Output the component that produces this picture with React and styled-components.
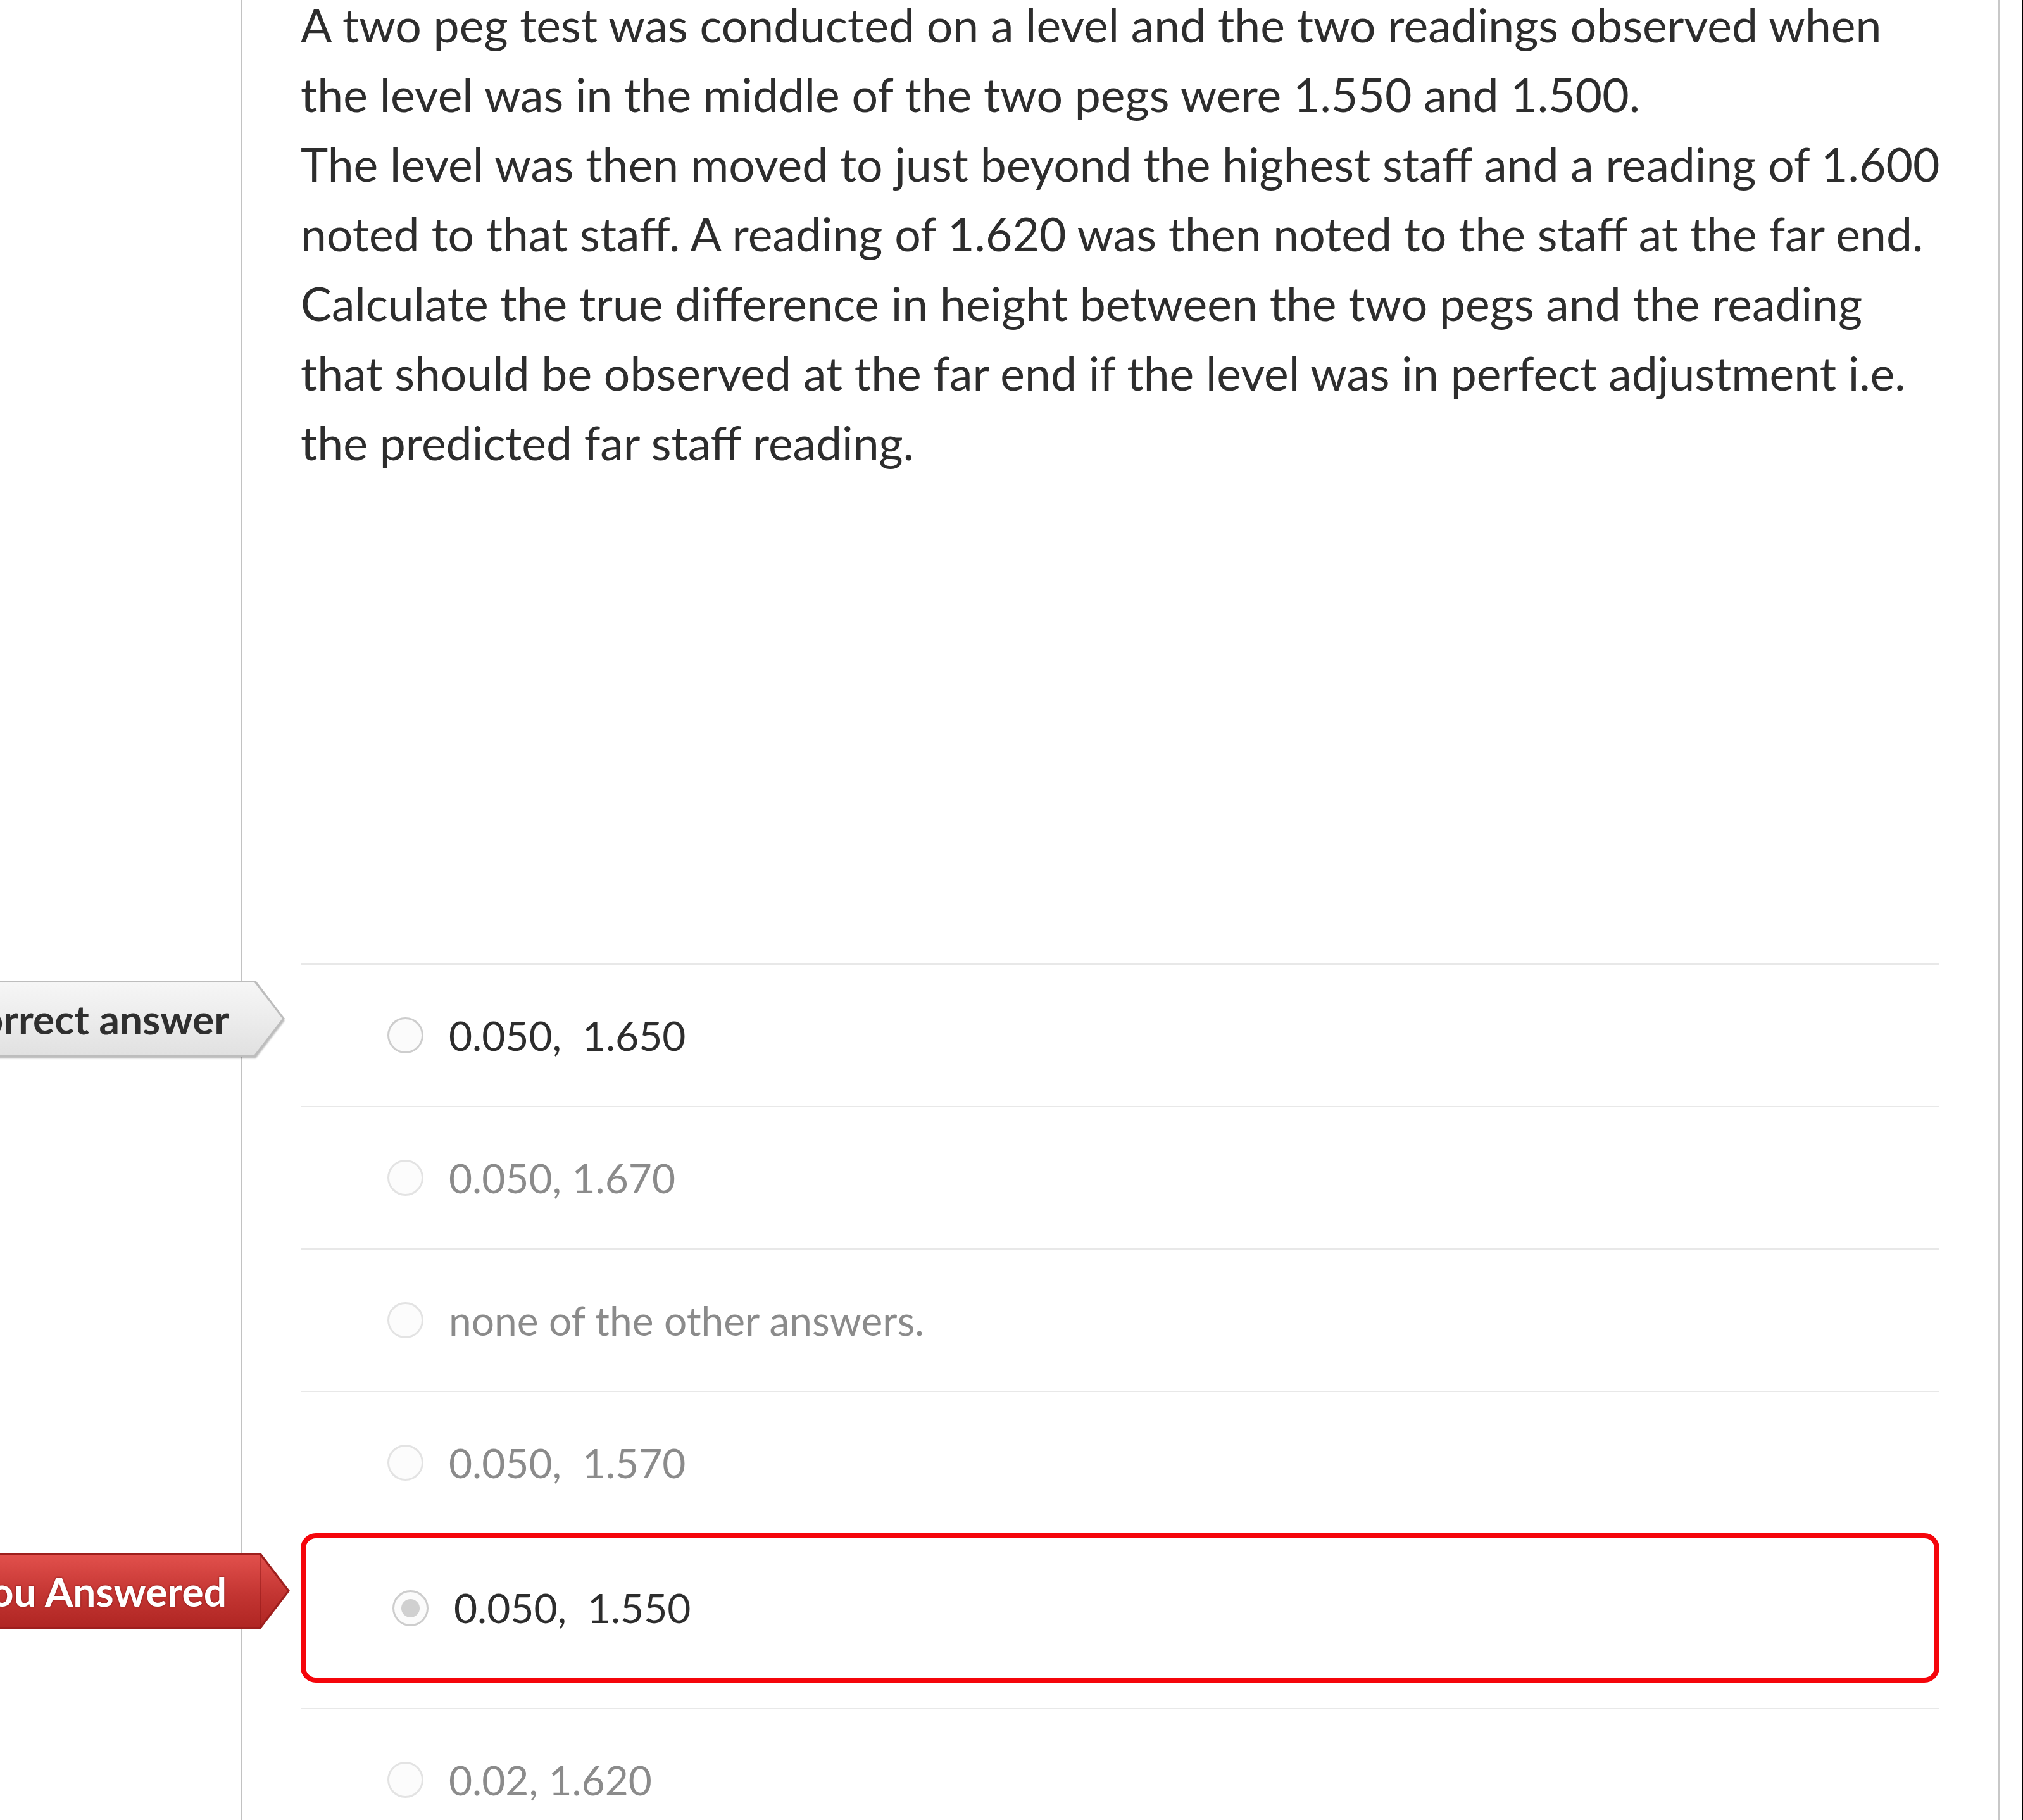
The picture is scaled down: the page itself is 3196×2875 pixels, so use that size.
import React from 'react';
import styled, { createGlobalStyle } from 'styled-components';

const GlobalStyle = createGlobalStyle`
    html, body {
        margin: 0;
        padding: 0;
        background: #ffffff;
    }
    body {
        font-family: Lato, "Open Sans", "Liberation Sans", sans-serif;
        color: #2d2d2d;
    }
`;

const Page = styled.div`
    display: flex;
    width: 3196px;
    height: 2875px;
    overflow: hidden;
    background: #ffffff;
`;

const Sidebar = styled.div`
    flex: 0 0 380px;
    border-right: 2px solid #c2c2c2;
`;

const Main = styled.main`
    flex: 1 1 auto;
    padding: 0 92px 0 93px;
    border-right: 3px solid #c8c8c8;
`;

const Gutter = styled.div`
    flex: 0 0 36px;
`;

const Edge = styled.div`
    flex: 0 0 4px;
    background: #000000;
`;

const Question = styled.div`
    margin: -16px 0 768px 0;
    font-size: 73.3px;
    line-height: 110px;
    color: #2d2d2d;
    white-space: nowrap;
`;

const AnswerList = styled.div`
    display: flex;
    flex-direction: column;
`;

const AnswerRow = styled.div`
    position: relative;
    box-sizing: border-box;
    height: 225px;
    display: flex;
    align-items: center;
    padding-left: 137px;
    border-top: 2px solid #e8e8e8;
`;

const SelectedRow = styled.div`
    position: relative;
    box-sizing: border-box;
    height: 236px;
    display: flex;
    align-items: center;
    padding-left: 137px;
    border: 8px solid #f5050b;
    border-radius: 24px;
    margin-bottom: 40px;
`;

const Choice = styled.div`
    display: flex;
    align-items: center;
    gap: 40px;
    opacity: ${props => props.faded ? 0.55 : 1};
`;

const Radio = styled.span`
    box-sizing: border-box;
    width: 57px;
    height: 57px;
    border-radius: 50%;
    border: 3px solid #cdcdcd;
    background: ${props => props.checked ? 'radial-gradient(circle, #d0d0d0 0 14px, #fbfbfb 15px)' : '#fbfbfb'};
    flex-shrink: 0;
`;

const ChoiceText = styled.span`
    font-size: 64px;
    line-height: 80px;
    color: #2d2d2d;
    white-space: pre;
`;

const TagShadow = styled.div`
    position: absolute;
    top: ${props => props.top}px;
    right: calc(100% + 25px);
    z-index: 2;
    filter: ${props => props.variant === 'wrong' ? 'none' : 'drop-shadow(0 3px 1px rgba(0, 0, 0, 0.25))'};
`;

const Tag = styled.div`
    position: relative;
    width: 640px;
    height: 120px;
    display: flex;
    align-items: center;
    justify-content: flex-end;
    box-sizing: border-box;
    padding-right: ${props => props.pad}px;
    font-size: 64px;
    font-weight: 700;
    isolation: isolate;
    clip-path: polygon(0 0, calc(100% - 46px) 0, 100% 50%, calc(100% - 46px) 100%, 0 100%);
    background: ${props => props.variant === 'wrong' ? '#9e1f1d' : '#bdbdbd'};
    color: ${props => props.variant === 'wrong' ? '#ffffff' : '#2f2f2f'};
    text-shadow: ${props => props.variant === 'wrong' ? '0 0 3px rgba(110, 10, 10, 0.9)' : 'none'};

    &::before {
        content: '';
        position: absolute;
        inset: 3px 4px 3px 0;
        z-index: -1;
        clip-path: polygon(0 0, calc(100% - 44px) 0, 100% 50%, calc(100% - 44px) 100%, 0 100%);
        background: ${props => props.variant === 'wrong'
            ? 'linear-gradient(#e2504c, #c33532 55%, #b02623)'
            : 'linear-gradient(#f6f6f6, #ebebeb 55%, #e1e1e1)'};
    }

    &::after {
        content: '';
        position: absolute;
        top: 3px;
        bottom: 3px;
        right: 46px;
        width: 2px;
        z-index: -1;
        background: ${props => props.variant === 'wrong' ? 'rgba(140, 20, 20, 0.5)' : 'transparent'};
    }
`;

const questionLines = [
    'A two peg test was conducted on a level and the two readings observed when',
    'the level was in the middle of the two pegs were 1.550 and 1.500.',
    'The level was then moved to just beyond the highest staff and a reading of 1.600',
    'noted to that staff. A reading of 1.620 was then noted to the staff at the far end.',
    'Calculate the true difference in height between the two pegs and the reading',
    'that should be observed at the far end if the level was in perfect adjustment i.e.',
    'the predicted far staff reading.',
];

const answers = [
    { text: '0.050,  1.650', correct: true },
    { text: '0.050, 1.670' },
    { text: 'none of the other answers.' },
    { text: '0.050,  1.570' },
    { text: '0.050,  1.550', selected: true },
    { text: '0.02, 1.620' },
];

function AnswerTag({ variant, top, pad, children }) {
    return (
        <TagShadow variant={variant} top={top}>
            <Tag variant={variant} pad={pad}>{children}</Tag>
        </TagShadow>
    );
}

function Answer({ answer }) {
    if (answer.selected) {
        return (
            <SelectedRow>
                <AnswerTag variant="wrong" top={23} pad={100}>You Answered</AnswerTag>
                <Choice>
                    <Radio checked />
                    <ChoiceText>{answer.text}</ChoiceText>
                </Choice>
            </SelectedRow>
        );
    }
    return (
        <AnswerRow>
            {answer.correct && <AnswerTag variant="right" top={25} pad={88}>Correct answer</AnswerTag>}
            <Choice faded={!answer.correct}>
                <Radio />
                <ChoiceText>{answer.text}</ChoiceText>
            </Choice>
        </AnswerRow>
    );
}

export default function App() {
    return (
        <>
            <GlobalStyle />
            <Page>
                <Sidebar />
                <Main>
                    <Question>
                        {questionLines.map((line, i) => (
                            <div key={i}>{line}</div>
                        ))}
                    </Question>
                    <AnswerList>
                        {answers.map((a, i) => <Answer key={i} answer={a} />)}
                    </AnswerList>
                </Main>
                <Gutter />
                <Edge />
            </Page>
        </>
    );
}
